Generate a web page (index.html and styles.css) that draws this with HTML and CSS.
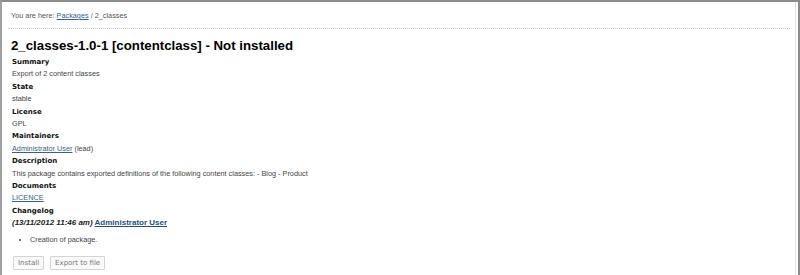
FILE: index.html
```html
<!DOCTYPE html>
<html>
<head>
<meta charset="utf-8">
<link rel="stylesheet" href="styles.css">
</head>
<body>
<div class="frame">
  <div class="inner">
    <div class="crumbs">You are here: <a href="#">Packages</a> / 2_classes</div>
    <div class="sep"></div>
    <h1 class="title">2_classes-1.0-1 [contentclass] - Not installed</h1>
    <dl class="props">
      <dt>Summary</dt>
      <dd>Export of 2 content classes</dd>
      <dt>State</dt>
      <dd>stable</dd>
      <dt>License</dt>
      <dd>GPL</dd>
      <dt>Maintainers</dt>
      <dd><a href="#">Administrator User</a> (lead)</dd>
      <dt>Description</dt>
      <dd>This package contains exported definitions of the following content classes: - Blog - Product</dd>
      <dt>Documents</dt>
      <dd><a href="#">LICENCE</a></dd>
      <dt>Changelog</dt>
      <dd class="log"><em>(13/11/2012 11:46 am)</em> <a href="#">Administrator User</a></dd>
    </dl>
    <ul class="changes">
      <li>Creation of package.</li>
    </ul>
    <div class="actions">
      <button class="btn">Install</button>
      <button class="btn">Export to file</button>
    </div>
  </div>
</div>
</body>
</html>
```
FILE: styles.css
```css
html, body {
  margin: 0;
  padding: 0;
  background: #ffffff;
}
body {
  width: 800px;
  height: 275px;
  overflow: hidden;
  font-family: "Liberation Sans", Arial, sans-serif;
  color: #444;
}
.frame {
  box-sizing: border-box;
  height: 275px;
  border-top: 2px solid #8c8c8c;
  border-left: 2px solid #a0a0a0;
  border-right: 2px solid #8c8c8c;
  background: #fff;
}
.inner {
  box-sizing: border-box;
  height: 100%;
  margin-right: 2px;
  border-right: 1px solid #e4e4e4;
  padding: 8px 0 0 6px;
}
.crumbs {
  font-size: 7.3px;
  line-height: 12px;
  color: #555;
  padding-left: 3px;
}
.crumbs a {
  color: #3b5f86;
  text-decoration: underline;
}
.sep {
  margin: 6px 0 0 0;
  width: 782px;
  border-top: 1px dotted #c8c8c8;
}
.title {
  margin: 8px 0 0 3px;
  font-size: 13.25px;
  line-height: 17px;
  font-weight: bold;
  color: #000;
}
.props {
  margin: 2px 0 0 4px;
}
.props dt {
  font-family: "DejaVu Sans", Verdana, sans-serif;
  font-weight: bold;
  font-size: 7px;
  line-height: 12.4px;
  color: #111;
}
.props dd {
  margin: 0;
  font-size: 7.3px;
  line-height: 12.4px;
  color: #444;
}
.props a {
  color: #3b5f86;
  text-decoration: underline;
}
.props dd.log {
  font-size: 8px;
  font-weight: bold;
  color: #222;
}
.props dd.log em {
  font-style: italic;
}
.props dd.log a {
  color: #1f4f7a;
}
.changes {
  margin: 4px 0 0 0;
  padding-left: 22px;
  font-size: 7.3px;
  line-height: 12.4px;
  color: #444;
  list-style: disc;
}
.actions {
  display: flex;
  gap: 6px;
  margin: 10px 0 0 5px;
}
.btn {
  font-family: "DejaVu Sans", Verdana, sans-serif;
  font-size: 7px;
  height: 14px;
  line-height: 12px;
  padding: 0 4px;
  color: #777;
  background: #fafafa;
  border: 1px solid #d4d4d4;
  border-radius: 1px;
}
```
